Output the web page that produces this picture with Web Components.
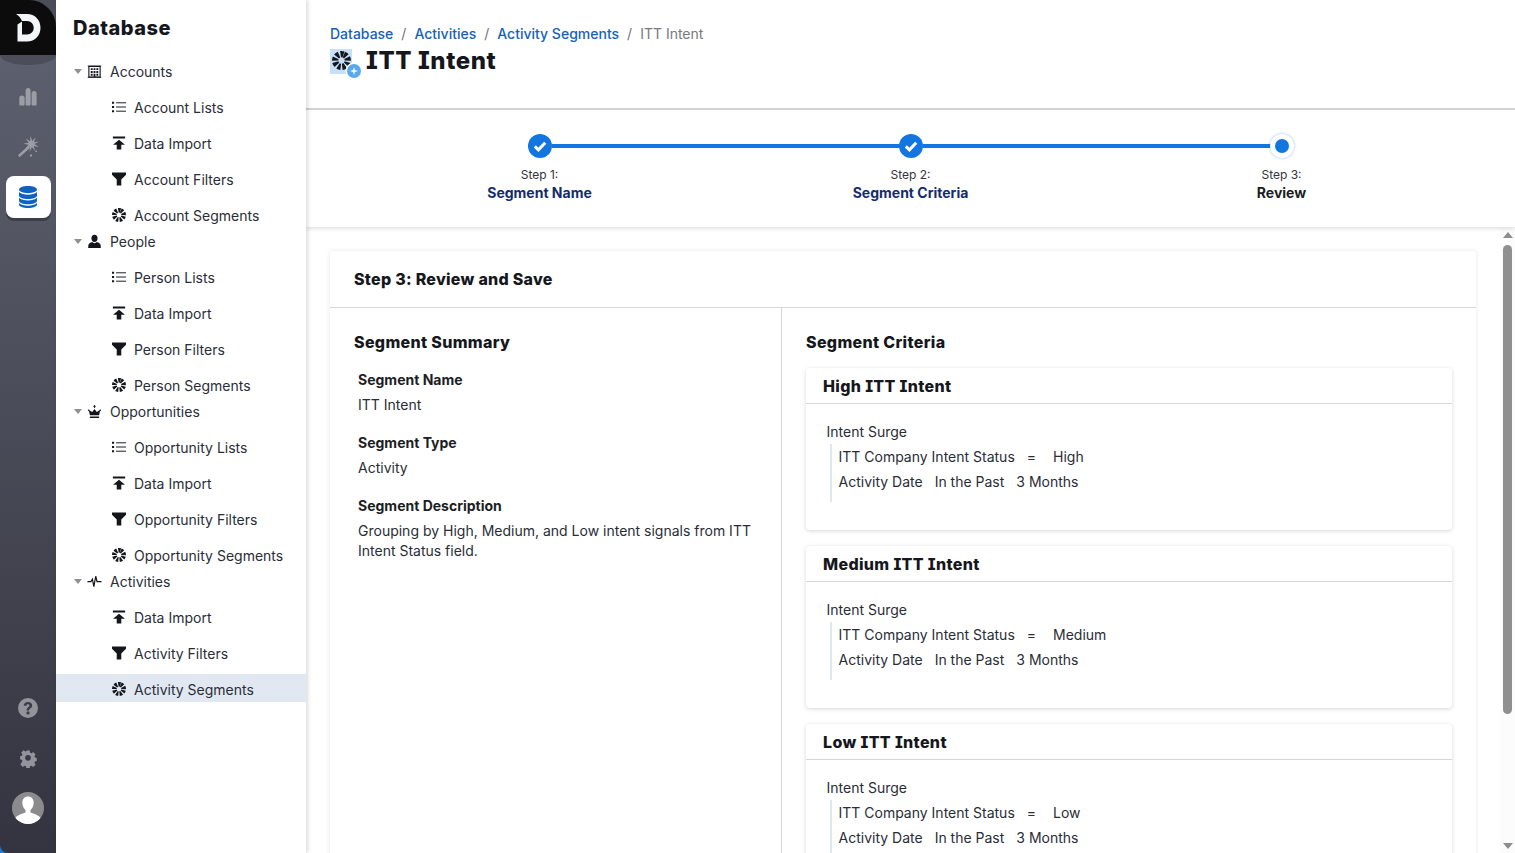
<!DOCTYPE html>
<html>
<head>
<meta charset="utf-8">
<title>ITT Intent</title>
<style>
  html, body { margin: 0; padding: 0; height: 100%; overflow: hidden; }
  body { font-family: Inter, "Liberation Sans", sans-serif; font-size: 14px; color: #2a2d36; background: #fff; }
</style>
</head>
<body>
<app-shell>
  <side-rail slot="rail"></side-rail>
  <nav-tree slot="nav" heading="Database">
    <nav-group label="Accounts" icon="building">
      <nav-item icon="list">Account Lists</nav-item>
      <nav-item icon="import">Data Import</nav-item>
      <nav-item icon="filter">Account Filters</nav-item>
      <nav-item icon="segment">Account Segments</nav-item>
    </nav-group>
    <nav-group label="People" icon="user">
      <nav-item icon="list">Person Lists</nav-item>
      <nav-item icon="import">Data Import</nav-item>
      <nav-item icon="filter">Person Filters</nav-item>
      <nav-item icon="segment">Person Segments</nav-item>
    </nav-group>
    <nav-group label="Opportunities" icon="crown">
      <nav-item icon="list">Opportunity Lists</nav-item>
      <nav-item icon="import">Data Import</nav-item>
      <nav-item icon="filter">Opportunity Filters</nav-item>
      <nav-item icon="segment">Opportunity Segments</nav-item>
    </nav-group>
    <nav-group label="Activities" icon="pulse">
      <nav-item icon="import">Data Import</nav-item>
      <nav-item icon="filter">Activity Filters</nav-item>
      <nav-item icon="segment" active>Activity Segments</nav-item>
    </nav-group>
  </nav-tree>
  <page-header slot="header" title="ITT Intent"></page-header>
  <step-bar slot="steps"></step-bar>
  <scroll-pane slot="content">
    <review-card heading="Step 3: Review and Save">
      <div slot="left">
        <section-title spaced>Segment Summary</section-title>
        <summary-field label="Segment Name">ITT Intent</summary-field>
        <summary-field label="Segment Type">Activity</summary-field>
        <summary-field label="Segment Description">Grouping by High, Medium, and Low intent signals from ITT Intent Status field.</summary-field>
      </div>
      <div slot="right">
        <section-title>Segment Criteria</section-title>
        <criteria-card heading="High ITT Intent" value="High"></criteria-card>
        <criteria-card heading="Medium ITT Intent" value="Medium"></criteria-card>
        <criteria-card heading="Low ITT Intent" value="Low"></criteria-card>
      </div>
    </review-card>
  </scroll-pane>
</app-shell>

<script>
  // star outline for the wand
  const starPoints = (cx, cy, big, small, n) => {
    const pts = [];
    for (let i = 0; i < n * 2; i++) {
      const r = i % 2 ? small : big;
      const a = (Math.PI * i) / n - 0.3;
      pts.push((cx + r * Math.cos(a)).toFixed(1) + "," + (cy + r * Math.sin(a)).toFixed(1));
    }
    return pts.join(" ");
  };

  const icons = {
    building: `<svg viewBox="0 0 16 16"><path fill="none" stroke="currentColor" stroke-width="1.2" d="M2 2.6h12v11.2H2z"/><path fill="none" stroke="currentColor" stroke-width="1" d="M.8 2.100h14.400M.8 14.200h14.400"/><path fill="currentColor" d="M4 4.500h2v2H4zM7 4.500h2v2H7zM10 4.500h2v2h-2zM4 7.500h2v2H4zM7 7.500h2v2H7zM10 7.500h2v2h-2zM4 10.500h2v2H4zM7 10.500h2v3H7zM10 10.500h2v2h-2z"/></svg>`,
    list: `<svg viewBox="0 0 16 16"><path fill="currentColor" d="M0 2h2.400v2.400H0zM0 6.800h2.400v2.400H0zM0 11.600h2.400v2.400H0z"/><path fill="none" stroke="currentColor" stroke-width="1.100" d="M4.600 3.200H16M4.600 8H16M4.600 12.800H16"/></svg>`,
    import: `<svg viewBox="0 0 16 16"><path fill="currentColor" d="M1 .6h14v2.200H1zM8 4.200l6.800 5.800h-4.200v5.400H5.400V10H1.200z"/></svg>`,
    filter: `<svg viewBox="0 0 16 16"><path fill="currentColor" d="M0 .6h16v2.600l-5.400 5.400v6.800H5.400V8.600L0 3.200z"/></svg>`,
    segment: `<svg viewBox="1 1 18 18"><circle cx="10" cy="10" r="6" fill="none" stroke="currentColor" stroke-width="6" stroke-dasharray="2.800 1.390" transform="rotate(-68 10 10)"/></svg>`,
    user: `<svg viewBox="0 0 16 16"><path fill="currentColor" d="M8 .8c2 0 3.300 1.500 3.300 3.600S10 8.600 8 8.600 4.700 6.500 4.700 4.400 6 .8 8 .8zM10.400 8.600c2.200.6 3.900 1.600 4.100 3.200l.3 3.200H1.200l.3-3.200c.2-1.600 1.900-2.600 4.100-3.200C6.300 9.400 7 9.800 8 9.800s1.700-.4 2.400-1.200z"/></svg>`,
    crown: `<svg viewBox="0 0 16 16"><path fill="currentColor" d="M8 .8l1.300 1.900L8 4.600 6.700 2.700zM8 5.200l2.400 3.300 3-1.900.3-.8 1.500.4-.6 1.300-.8.3-.9 4.300H3.100l-.9-4.300-.8-.3L.8 6.200l1.500-.4.3.8 3 1.900zM3.100 13.400h9.800v1.500H3.100z"/></svg>`,
    pulse: `<svg viewBox="0 0 16 16"><path fill="none" stroke="currentColor" stroke-width="1.300" d="M.5 8.200h3.700l1.600-2.600 1.500 8 2-11.200 1.400 5.800h4.800"/></svg>`
  };

  class AppShell extends HTMLElement {
    constructor() {
      super();
      this.attachShadow({mode: "open"}).innerHTML = `
      <style>
        :host { display: grid; grid-template-columns: 56px 250px 1fr; height: 853px; width: 1515px; overflow: hidden; background: #1a7be0; }
        .side { background: #fff; box-shadow: 2px 0 4px rgba(0,0,0,.14); position: relative; z-index: 2; height: 853px; overflow: hidden; }
        .main { background: #fff; display: flex; flex-direction: column; height: 853px; min-width: 0; }
      </style>
      <slot name="rail"></slot>
      <div class="side"><slot name="nav"></slot></div>
      <div class="main">
        <slot name="header"></slot>
        <slot name="steps"></slot>
        <slot name="content"></slot>
      </div>`;
    }
  }

  class SideRail extends HTMLElement {
    constructor() {
      super();
      this.attachShadow({mode: "open"}).innerHTML = `
      <style>
        :host { display: flex; flex-direction: column; align-items: center; height: 853px; width: 56px; background: linear-gradient(#5f6270, #33343f); border-bottom-left-radius: 8px; position: relative; }
        .logo { width: 56px; height: 65px; background: #4b4d59; border-radius: 0 0 50% 50% / 0 0 10px 10px; flex: none; }
        .logo div { height: 55px; background: #0c0c0d; border-top-right-radius: 27px; box-sizing: border-box; padding: 14px 0 0 16px; }
        .logo svg { width: 25px; height: 28px; display: block; }
        .tool { width: 24px; height: 24px; color: #9b9da6; display: flex; align-items: center; justify-content: center; flex: none; }
        .tool svg { width: 100%; height: 100%; display: block; }
        .bars { margin-top: 20px; }
        .wand { margin-top: 25px; }
        .tile { margin-top: 18px; width: 45px; height: 42px; border-radius: 8px; background: #fff; box-shadow: 0 3px 0 rgba(40,42,52,.55); display: flex; align-items: center; justify-content: center; color: #0f62c4; flex: none; }
        .tile svg { width: 18px; height: 22px; }
        .grow { flex: 1; }
        .help { margin-bottom: 26px; color: #92939b; }
        .cog { margin-bottom: 22px; color: #92939b; }
        .cog svg { width: 20px; height: 20px; }
        .avatar { width: 32px; height: 32px; margin-bottom: 29px; flex: none; }
        .avatar svg { width: 32px; height: 32px; display: block; }
      </style>
      <div class="logo"><div>
        <svg viewBox="16 14 25 28"><path fill="#f4f5f8" d="M16 14h11c8 0 13.500 6 13.500 13.800S35 41.500 27 41.500H17.500V24.500l4.500-3V34.500h5c4 0 6.700-2.900 6.700-6.700S31 21 27 21h-5C20.500 17.500 18.500 15.500 16 14z"/></svg>
      </div></div>
      <div class="tool bars"><svg viewBox="0 0 24 24"><path fill="currentColor" d="M3.300 13.100a2.600 2.600 0 0 1 5.300 0v6.500a1 1 0 0 1-1 1H4.300a1 1 0 0 1-1-1zM9.600 5.500a2.500 2.500 0 0 1 5 0v14.100a1 1 0 0 1-1 1h-3a1 1 0 0 1-1-1zM15.600 8.500a2.500 2.500 0 0 1 5 0v11.100a1 1 0 0 1-1 1h-3a1 1 0 0 1-1-1z"/></svg></div>
      <div class="tool wand"><svg viewBox="0 0 24 24"><polygon fill="currentColor" points="${starPoints(15.5, 10, 8, 3, 9)}"/><path fill="none" stroke="currentColor" stroke-width="2.600" stroke-linecap="round" d="M3.500 21.500 12.500 13.500"/><path fill="currentColor" d="M14 20.500h2v2h-2zM19.500 16.500h1.500V18h-1.500z"/></svg></div>
      <div class="tile"><svg viewBox="0 0 19 22" preserveAspectRatio="none"><path fill="currentColor" d="M9.500 0C14.700 0 19 1.600 19 3.600S14.700 7.200 9.500 7.200 0 5.600 0 3.600 4.300 0 9.500 0zM0 6c2 1.900 5.700 2.700 9.500 2.700S17 7.900 19 6v3.400c0 2-4.300 3.600-9.500 3.600S0 11.400 0 9.400zM0 11.800c2 1.900 5.700 2.700 9.500 2.700s7.500-.8 9.500-2.700v2.900c0 2-4.300 3.600-9.500 3.600S0 16.700 0 14.700zM0 17c2 1.900 5.700 2.700 9.500 2.700S17 18.900 19 17v1.400c0 2-4.300 3.600-9.500 3.600S0 20.400 0 18.400z"/></svg></div>
      <div class="grow"></div>
      <div class="tool help"><svg viewBox="0 0 24 24"><path fill="currentColor" fill-rule="evenodd" d="M12 2a10 10 0 1 1 0 20 10 10 0 0 1 0-20zM12 6c-2.600 0-4.200 1.400-4.300 3.700h2.700c.1-.9.600-1.400 1.500-1.400.9 0 1.500.5 1.500 1.200 0 .7-.4 1.100-1.200 1.700-1.200.9-1.700 1.700-1.600 3.300h2.600c0-.9.200-1.300 1-1.900 1.200-.9 2-1.700 2-3.200C16.200 7.300 14.500 6 12 6zM12 15.300a1.600 1.600 0 1 0 0 3.200 1.600 1.600 0 0 0 0-3.200z"/></svg></div>
      <div class="tool cog"><svg viewBox="0 0 24 24"><path fill="currentColor" fill-rule="evenodd" d="M10 3.500h4l.5 2.500 1.600.7 2.200-1.400 2.800 2.800-1.400 2.200.7 1.600 2.100.5v3.700l-2.200.5-.6 1.600 1.400 2.200-2.800 2.800-2.200-1.400-1.600.6-.5 2.100h-4l-.5-2.200-1.600-.6-2.200 1.400-2.800-2.800L5.300 16l-.7-1.600-2.100-.5v-3.700l2.200-.5.6-1.600-1.400-2.200 2.800-2.800 2.200 1.400 1.600-.6zM12 8.800a3.400 3.400 0 1 0 0 6.800 3.400 3.400 0 0 0 0-6.800z" transform="translate(0 -.4)"/></svg></div>
      <div class="avatar"><svg viewBox="0 0 32 32"><defs><clipPath id="a"><circle cx="16" cy="16" r="16"/></clipPath></defs><circle cx="16" cy="16" r="16" fill="#8b8b8d"/><g clip-path="url(#a)" fill="#fff"><path d="M16 4.500c3.500 0 5.700 2.700 5.700 6.300 0 3.300-1.700 6-3.200 7.200v2.500c3.600 1 8.500 2.700 10.500 6V32H3v-5.500c2-3.300 6.900-5 10.500-6V18c-1.500-1.200-3.200-3.900-3.200-7.200 0-3.600 2.200-6.300 5.700-6.300z"/></g></svg></div>`;
    }
  }

  class NavTree extends HTMLElement {
    constructor() {
      super();
      this.attachShadow({mode: "open"}).innerHTML = `
      <style>
        :host { display: block; }
        h1 { margin: 0; padding: 17px 0 0 17px; height: 45px; box-sizing: border-box; font: 800 20px/22px Inter, sans-serif; color: #15171c; letter-spacing: .5px; }
      </style>
      <h1>${this.getAttribute("heading")}</h1>
      <slot></slot>`;
    }
  }

  class NavGroup extends HTMLElement {
    constructor() {
      super();
      this.attachShadow({mode: "open"}).innerHTML = `
      <style>
        :host { display: block; }
        .head { display: flex; align-items: center; height: 20px; margin: 3px 0 11px 0; padding-left: 18px; color: #2a2d36; }
        :host(:first-of-type) .head { margin-top: 16px; }
        .caret { width: 0; height: 0; border: 4.5px solid transparent; border-top: 5px solid #8f9094; border-bottom: 0; margin-right: 5px; }
        .ico { width: 15px; height: 15px; color: #14161a; margin-right: 8px; }
        .ico svg { width: 15px; height: 15px; display: block; }
      </style>
      <div class="head"><span class="caret"></span><span class="ico">${icons[this.getAttribute("icon")]}</span><span>${this.getAttribute("label")}</span></div>
      <slot></slot>`;
    }
  }

  class NavItem extends HTMLElement {
    constructor() {
      super();
      this.attachShadow({mode: "open"}).innerHTML = `
      <style>
        :host { display: block; margin-bottom: 8px; }
        :host(:last-child) { margin-bottom: 0; }
        .row { display: flex; align-items: center; height: 28px; padding-left: 56px; padding-top: 2px; box-sizing: border-box; }
        :host([active]) .row { background: #e1e8f2; }
        .ico { width: 14px; height: 14px; color: #14161a; margin-right: 8px; flex: none; }
        .ico svg { width: 14px; height: 14px; display: block; }
      </style>
      <div class="row"><span class="ico">${icons[this.getAttribute("icon")]}</span><slot></slot></div>`;
    }
  }

  class PageHeader extends HTMLElement {
    constructor() {
      super();
      this.attachShadow({mode: "open"}).innerHTML = `
      <style>
        :host { display: block; height: 110px; box-sizing: border-box; border-bottom: 2px solid #d4d4d4; padding: 24px 0 0 24px; flex: none; }
        .crumbs { display: flex; line-height: 20px; }
        .crumbs a { color: #1562b8; text-decoration: none; font-weight: 500; }
        .crumbs i { font-style: normal; color: #6f7278; margin: 0 8px; }
        .crumbs span { color: #77797e; }
        .title { display: flex; align-items: center; margin-top: 4px; }
        .badge { position: relative; width: 22px; height: 25px; background: #c7e0f8; margin-right: 14px; color: #15171c; }
        .badge svg.seg { width: 19px; height: 19px; position: absolute; left: 2px; top: 2px; }
        .plus { position: absolute; left: 17px; top: 15px; width: 14px; height: 14px; border-radius: 50%; background: #5aa9ee; box-shadow: 0 0 0 1.5px #fff; display: flex; align-items: center; justify-content: center; }
        .plus svg { width: 8px; height: 8px; }
        h2 { margin: 0; font: 800 24px/26px Inter, sans-serif; color: #15171c; font-feature-settings: "cv08"; letter-spacing: .6px; }
      </style>
      <div class="crumbs"><a>Database</a><i>/</i><a>Activities</a><i>/</i><a>Activity Segments</a><i>/</i><span>ITT Intent</span></div>
      <div class="title">
        <div class="badge">${icons.segment.replace("<svg", '<svg class="seg"')}<span class="plus"><svg viewBox="0 0 8 8"><path fill="#fff" d="M4 0l.9 3.100L8 4l-3.100.9L4 8l-.9-3.100L0 4l3.100-.9z"/></svg></span></div>
        <h2>${this.getAttribute("title")}</h2>
      </div>`;
    }
  }

  class StepBar extends HTMLElement {
    constructor() {
      super();
      const steps = [["Step 1:", "Segment Name", 1], ["Step 2:", "Segment Criteria", 1], ["Step 3:", "Review", 0]];
      const html = steps.map((s) => `
        <div class="step ${s[2] ? "done" : "now"}">
          <div class="dot">${s[2]
            ? '<svg viewBox="0 0 24 24" width="24" height="24"><circle cx="12" cy="12" r="12" fill="#1275e0"/><path fill="none" stroke="#fff" stroke-width="3" d="M6.800 12.400l3.600 3.500 6.800-7.200"/></svg>'
            : '<span></span>'}</div>
          <div class="num">${s[0]}</div>
          <div class="name">${s[1]}</div>
        </div>`).join("");
      this.attachShadow({mode: "open"}).innerHTML = `
      <style>
        :host { display: grid; grid-template-columns: repeat(3, 371px); justify-content: center; height: 117px; box-sizing: border-box; padding-top: 24px; box-shadow: 0 2px 4px rgba(0,0,0,.12); position: relative; z-index: 1; flex: none; background: #fff; }
        .step { display: flex; flex-direction: column; align-items: center; position: relative; }
        .step.done::after { content: ""; position: absolute; left: 50%; width: 100%; top: 10px; height: 4px; background: #1275e0; }
        .dot { width: 24px; height: 24px; border-radius: 50%; position: relative; z-index: 1; background: #fff; display: flex; align-items: center; justify-content: center; box-shadow: 0 0 3px rgba(18,117,224,.45); }
        .dot svg { display: block; }
        .dot span { width: 14px; height: 14px; border-radius: 50%; background: #1275e0; }
        .done .dot { box-shadow: none; }
        .num { font-size: 12px; line-height: 16px; margin-top: 9px; color: #33353b; }
        .name { font-size: 14px; line-height: 20px; font-weight: 700; color: #142c6b; }
        .now .name { color: #1c1d20; }
      </style>
      ${html}`;
    }
  }

  class ScrollPane extends HTMLElement {
    constructor() {
      super();
      this.attachShadow({mode: "open"}).innerHTML = `
      <style>
        :host { display: flex; flex: 1; min-height: 0; overflow: hidden; background: #fff; }
        .body { flex: 1; min-width: 0; overflow: hidden; padding: 24px 24px 0 24px; box-sizing: border-box; }
        .bar { width: 15px; flex: none; display: flex; flex-direction: column; align-items: center; background: #fcfcfc; }
        .up, .down { width: 0; height: 0; border: 5px solid transparent; flex: none; }
        .up { border-bottom: 6px solid #8d8d8d; border-top: 0; margin-top: 5px; }
        .thumb { width: 9px; height: 469px; background: #8f8f8f; border-radius: 5px; margin-top: 7px; flex: none; }
        .grow { flex: 1; }
        .down { border-top: 6px solid #8d8d8d; border-bottom: 0; margin-bottom: 4px; }
      </style>
      <div class="body"><slot></slot></div>
      <div class="bar"><div class="up"></div><div class="thumb"></div><div class="grow"></div><div class="down"></div></div>`;
    }
  }

  class ReviewCard extends HTMLElement {
    constructor() {
      super();
      this.attachShadow({mode: "open"}).innerHTML = `
      <style>
        :host { display: block; background: #fff; box-shadow: 0 0 4px rgba(0,0,0,.1); border-radius: 3px 3px 0 0; }
        .head { height: 57px; box-sizing: border-box; border-bottom: 1px solid #d6d6d6; padding: 0 24px; display: flex; align-items: center; font: 800 16px/20px Inter, sans-serif; color: #15171c; letter-spacing: .27px; font-feature-settings: "cv08"; }
        .cols { display: grid; grid-template-columns: 452px 1fr; }
        .left { border-right: 1px solid #d6d6d6; padding: 23px 24px 0 24px; box-sizing: border-box; min-height: 600px; }
        .right { padding: 23px 24px 0 24px; }
      </style>
      <div class="head">${this.getAttribute("heading")}</div>
      <div class="cols"><div class="left"><slot name="left"></slot></div><div class="right"><slot name="right"></slot></div></div>`;
    }
  }

  class SectionTitle extends HTMLElement {
    constructor() {
      super();
      this.attachShadow({mode: "open"}).innerHTML = `
      <style>
        :host { display: block; font: 800 16px/22px Inter, sans-serif; color: #15171c; letter-spacing: .33px; margin-bottom: 15px; }
        :host([spaced]) { margin-bottom: 17px; }
      </style>
      <slot></slot>`;
    }
  }

  class SummaryField extends HTMLElement {
    constructor() {
      super();
      this.attachShadow({mode: "open"}).innerHTML = `
      <style>
        :host { display: block; padding-left: 4px; margin: 0 0 18px; line-height: 20px; color: #2a2d36; }
        .label { font-weight: 700; color: #1c1e24; margin-bottom: 5px; }
      </style>
      <div class="label">${this.getAttribute("label")}</div>
      <slot></slot>`;
    }
  }

  class CriteriaCard extends HTMLElement {
    constructor() {
      super();
      this.attachShadow({mode: "open"}).innerHTML = `
      <style>
        :host { display: block; background: #fff; border-radius: 4px; box-shadow: 0 1px 4px rgba(0,0,0,.16); margin-bottom: 16px; height: 162px; overflow: hidden; }
        .head { height: 36px; box-sizing: border-box; border-bottom: 1px solid #d6d6d6; padding: 0 17px; display: flex; align-items: center; font: 800 16px/20px Inter, sans-serif; color: #15171c; letter-spacing: .35px; font-feature-settings: "cv08"; }
        .body { padding: 18px 20.500px 0; line-height: 20px; color: #2a2d36; }
        .rule { border-left: 2px solid #e1e6f0; margin: 2px 0 0 3.500px; padding-left: 6.500px; height: 58px; }
        .line { display: flex; height: 25px; align-items: center; }
        .line span { margin-right: 12px; }
        .line .eq { margin: 0 17px 0 0; }
      </style>
      <div class="head">${this.getAttribute("heading")}</div>
      <div class="body">
        <div>Intent Surge</div>
        <div class="rule">
          <div class="line"><span>ITT Company Intent Status</span><span class="eq">=</span><span>${this.getAttribute("value")}</span></div>
          <div class="line"><span>Activity Date</span><span>In the Past</span><span>3 Months</span></div>
        </div>
      </div>`;
    }
  }

  window.customElements.define("app-shell", AppShell);
  window.customElements.define("side-rail", SideRail);
  window.customElements.define("nav-tree", NavTree);
  window.customElements.define("nav-group", NavGroup);
  window.customElements.define("nav-item", NavItem);
  window.customElements.define("page-header", PageHeader);
  window.customElements.define("step-bar", StepBar);
  window.customElements.define("scroll-pane", ScrollPane);
  window.customElements.define("review-card", ReviewCard);
  window.customElements.define("section-title", SectionTitle);
  window.customElements.define("summary-field", SummaryField);
  window.customElements.define("criteria-card", CriteriaCard);
</script>
</body>
</html>
